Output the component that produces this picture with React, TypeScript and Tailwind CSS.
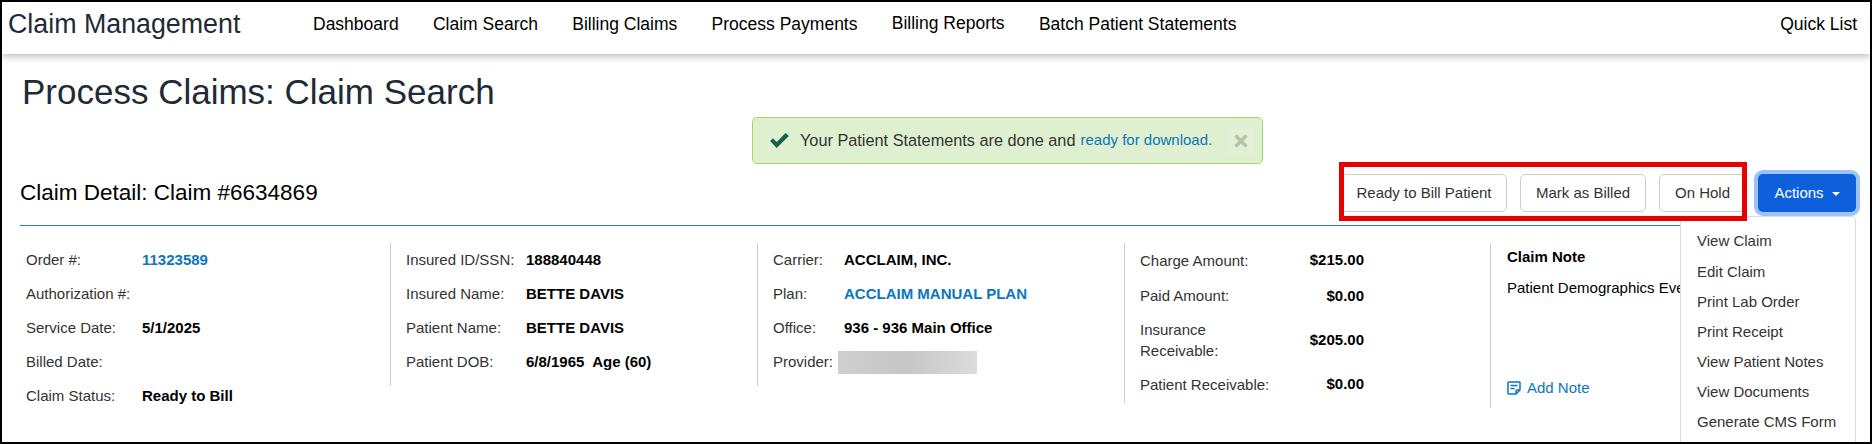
import { ReactNode } from "react";

const navItems = ["Dashboard", "Claim Search", "Billing Claims", "Process Payments", "Billing Reports", "Batch Patient Statements"];
const menuItems = ["View Claim", "Edit Claim", "Print Lab Order", "Print Receipt", "View Patient Notes", "View Documents", "Generate CMS Form"];

function Row({ label, width, children }: { label: string; width: string; children?: ReactNode }) {
  return (
    <div className="flex h-[34px] items-center">
      <span className={`${width} shrink-0 text-[#333]`}>{label}</span>
      <span className="font-bold text-black">{children}</span>
    </div>
  );
}

function Money({ label, value }: { label: ReactNode; value: string }) {
  return (
    <div className="flex items-center justify-between">
      <span className="w-[140px] leading-[21px] text-[#333]">{label}</span>
      <span className="font-bold text-black">{value}</span>
    </div>
  );
}

export default function App() {
  return (
    <div className="relative h-[444px] w-[1872px] overflow-hidden border-2 border-black bg-white font-['Liberation_Sans',Arial,sans-serif] text-[15px] text-[#333]">
      {/* Top nav */}
      <nav className="flex h-[52px] items-center bg-white pl-[6px] pr-[13px] pb-[8px] shadow-[0_2px_8px_rgba(0,0,0,0.3)]">
        <span className="w-[305px] text-[26.8px] text-[#1f2a37]">Claim Management</span>
        <div className="flex gap-[34.3px] text-[17.5px] text-black">
          {navItems.map((item) => (
            <span key={item} className={item === "Billing Reports" ? "-translate-y-px" : ""}>
              {item}
            </span>
          ))}
        </div>
        <span className="ml-auto text-[17.5px] text-black">Quick List</span>
      </nav>

      <main className="px-[18px]">
        <div className="flex items-start">
          <h1 className="w-[732px] pl-[2px] pt-[16px] text-[35px] leading-[44px] text-[#1f2a37]">Process Claims: Claim Search</h1>
          <div className="mt-[63px] flex h-[47px] w-[511px] items-center rounded-[5px] border border-[#a5d85f] bg-[#dff0d1] pl-[17px] text-[16.3px]">
            <svg viewBox="0 0 20 16" className="h-[15px] w-[19px] fill-[#14664a]">
              <path d="M0 8.5 3 5.5l4 4L16.5 0 20 3.2 7 16z" />
            </svg>
            <span className="ml-[11px] text-[#333]">Your Patient Statements are done and</span>
            <span className="ml-[5px] text-[15px] text-[#0b76bd]">ready for download.</span>
            <span className="ml-[16px] flex h-[28px] w-[26px] items-center justify-center bg-[#e2f1d6]">
              <svg viewBox="0 0 14 14" className="h-[14px] w-[14px] stroke-[#b5c3a9] stroke-[3.4]">
                <path d="M1.5 1.5l11 11M12.5 1.5l-11 11" />
              </svg>
            </span>
          </div>
        </div>

        <div className="mt-[10px] flex h-[52px] items-start justify-between border-b border-[#2a7fc0]">
          <h2 className="pt-[5px] text-[22.5px] leading-[28px] text-black">Claim Detail: Claim #6634869</h2>
          <div className="-mr-[4px] flex items-center">
            <button className="h-[38px] w-[166px] rounded-[5px] border border-[#ccc] bg-white">Ready to Bill Patient</button>
            <button className="ml-[13px] h-[38px] w-[126px] rounded-[5px] border border-[#ccc] bg-white">Mark as Billed</button>
            <button className="ml-[13px] h-[38px] w-[87px] rounded-[5px] border border-[#ccc] bg-white">On Hold</button>
            <button className="ml-[12px] flex h-[38px] w-[98px] items-center justify-center gap-[8px] rounded-[5px] bg-[#0d5fdc] text-white ring-4 ring-[#9cc2f8]">
              Actions
              <span className="mt-[2px] border-x-[4px] border-t-[4px] border-x-transparent border-t-white" />
            </button>
          </div>
        </div>

        {/* Detail columns */}
        <div className="mt-[17px] flex items-start">
          <div className="w-[370px] pl-[6px]">
            <Row label="Order #:" width="w-[116px]"><span className="text-[#0b76bd]">11323589</span></Row>
            <Row label="Authorization #:" width="w-[116px]" />
            <Row label="Service Date:" width="w-[116px]">5/1/2025</Row>
            <Row label="Billed Date:" width="w-[116px]" />
            <Row label="Claim Status:" width="w-[116px]">Ready to Bill</Row>
          </div>
          <div className="h-[143px] w-[367px] border-l border-[#ccc] pl-[15px]">
            <Row label="Insured ID/SSN:" width="w-[120px]">188840448</Row>
            <Row label="Insured Name:" width="w-[120px]">BETTE DAVIS</Row>
            <Row label="Patient Name:" width="w-[120px]">BETTE DAVIS</Row>
            <Row label="Patient DOB:" width="w-[120px]">6/8/1965&nbsp; Age (60)</Row>
          </div>
          <div className="h-[143px] w-[367px] border-l border-[#ccc] pl-[15px]">
            <Row label="Carrier:" width="w-[71px]">ACCLAIM, INC.</Row>
            <Row label="Plan:" width="w-[71px]"><span className="text-[#0b76bd]">ACCLAIM MANUAL PLAN</span></Row>
            <Row label="Office:" width="w-[71px]">936 - 936 Main Office</Row>
            <div className="flex h-[34px] items-center">
              <span className="w-[65px] shrink-0">Provider:</span>
              <div className="h-[23px] w-[139px] bg-gradient-to-r from-[#cfcfcf] via-[#c6c6c6] to-[#dcdcdc]" />
            </div>
          </div>
          <div className="flex h-[160px] w-[366px] flex-col border-l border-[#ccc] pl-[15px] pr-[126px] pt-[6px]">
            <Money label="Charge Amount:" value="$215.00" />
            <div className="mt-[13px]"><Money label="Paid Amount:" value="$0.00" /></div>
            <div className="mt-[12px]"><Money label={<>Insurance<br />Receivable:</>} value="$205.00" /></div>
            <div className="mt-[12px]"><Money label="Patient Receivable:" value="$0.00" /></div>
          </div>
          <div className="flex h-[165px] flex-col border-l border-[#ccc] pl-[16px]">
            <div className="pt-[6px] font-bold leading-[16px] text-black">Claim Note</div>
            <div className="mt-[15px] whitespace-nowrap leading-[16px] text-black">Patient Demographics Eve</div>
            <div className="mt-[81px] flex items-center gap-[6px] text-[#0b76bd]">
              <svg viewBox="0 0 14 14" className="h-[14px] w-[14px] fill-none stroke-[#0b76bd] stroke-[1.5]">
                <path d="M1.7 1h10.6c.4 0 .7.3.7.7V9L9 13H1.7c-.4 0-.7-.3-.7-.7V1.7c0-.4.3-.7.7-.7zM3.5 4.5h7M3.5 7.5h4M13 9h-3a1 1 0 0 0-1 1v3" />
              </svg>
              Add Note
            </div>
          </div>
        </div>
      </main>

      {/* Actions dropdown */}
      <div className="absolute left-[1678px] top-[214px] h-[240px] w-[176px] rounded-[4px] border border-[#ddd] bg-white px-[16px] pt-[9px]">
        {menuItems.map((item, i) => (
          <div key={item} className={`flex h-[30px] items-center whitespace-nowrap ${i === 0 ? "mb-px" : ""}`}>{item}</div>
        ))}
      </div>

      {/* Red annotation */}
      <div className="absolute left-[1337px] top-[160px] h-[59px] w-[408px] border-[5px] border-[#e60000]" />
    </div>
  );
}
